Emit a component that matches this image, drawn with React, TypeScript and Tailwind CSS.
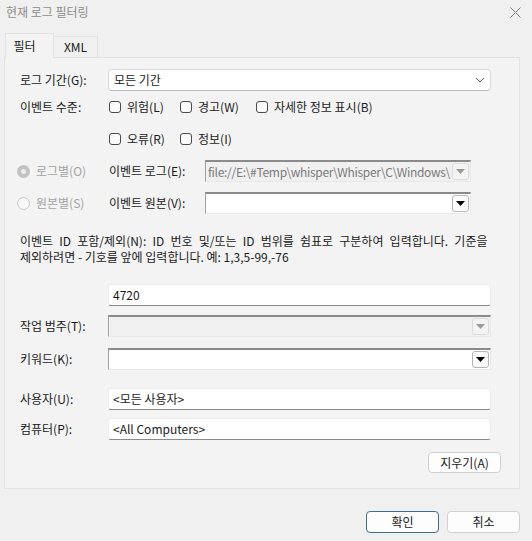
import React from 'react';

const font = { fontFamily: '"Noto Sans CJK KR", "Noto Sans", sans-serif' };

function Chevron() {
  return (
    <svg width="10" height="6" viewBox="0 0 10 6" className="text-[#5f5f5f]">
      <path d="M1 1l4 4 4-4" fill="none" stroke="currentColor" strokeWidth="1" />
    </svg>
  );
}

function DropButton({ disabled }: { disabled?: boolean }) {
  return (
    <div
      className={`flex h-[17px] w-[17px] items-center justify-center rounded-[3px] border ${
        disabled ? 'border-[#dcdcdc] bg-[#f3f3f3]' : 'border-[#b5b5b5] bg-[#fbfbfb]'
      }`}
    >
      <svg width="9" height="5" viewBox="0 0 9 5">
        <path d="M0 0h9L4.5 5z" fill={disabled ? '#9a9a9a' : '#000'} />
      </svg>
    </div>
  );
}

function Check({ label, w }: { label: string; w: string }) {
  return (
    <div className={`flex items-center ${w}`}>
      <span className="h-[12px] w-[12px] rounded-[3px] border border-[#4a4a4a] bg-[#fbfbfb]" />
      <span className="ml-[6px] text-[12px] text-[#1a1a1a]">{label}</span>
    </div>
  );
}

function ClassicCombo({
  width,
  disabled,
  text,
}: {
  width: string;
  disabled?: boolean;
  text?: string;
}) {
  return (
    <div
      className={`flex h-[22px] ${width} items-center overflow-hidden border-t-2 border-l border-b border-r border-t-[#8a8a8a] border-l-[#a0a0a0] border-b-[#e8e8e8] border-r-[#e8e8e8] ${
        disabled ? 'bg-[#f0f0f0]' : 'bg-white'
      }`}
    >
      <span className="min-w-0 flex-1 overflow-hidden whitespace-nowrap pl-[2px] text-[12px] tracking-[-0.3px] text-[#7a7a7a]">
        {text}
      </span>
      <div className="mr-[1px] shrink-0">
        <DropButton disabled={disabled} />
      </div>
    </div>
  );
}

function TextBox({ value }: { value: string }) {
  return (
    <div className="flex h-[22px] w-[383px] items-center rounded-[3px] border border-[#ececec] border-b-[#8a8a8a] bg-white pl-[4px] text-[12px] text-[#1a1a1a]">
      {value}
    </div>
  );
}

export default function App() {
  return (
    <div className="relative h-[541px] w-[532px] overflow-hidden bg-[#f0f0f0]" style={font}>
      <div className="flex h-[24px] items-center justify-between pl-[6px] pr-[11px]">
        <span className="text-[12px] text-[#8c8c8c]">현재 로그 필터링</span>
        <svg width="11" height="11" viewBox="0 0 11 11">
          <path d="M0.5 0.5l10 10M10.5 0.5l-10 10" stroke="#7a7a7a" strokeWidth="1" />
        </svg>
      </div>

      <div className="ml-[5px] mt-[9px] flex h-[24px] items-end">
        <div className="relative z-10 -mb-px flex h-[25px] w-[49px] items-start justify-center border border-b-0 border-[#e2e2e2] bg-[#f3f3f3] pt-[3px] pr-[10px] text-[12px] text-[#1a1a1a]">
          필터
        </div>
        <div className="flex h-[21px] w-[44px] items-center justify-center border border-l-0 border-b-0 border-[#e2e2e2] bg-[#f0f0f0] text-[12px] text-[#1a1a1a]">
          XML
        </div>
      </div>

      <div className="ml-[4px] flex h-[432px] w-[516px] flex-col border border-[#e2e2e2] bg-[#f3f3f3] pl-[15px]">
        <div className="mt-[11px] flex h-[22px] items-center">
          <span className="w-[88px] text-[12px] text-[#1a1a1a]">로그 기간(G):</span>
          <div className="flex h-[22px] w-[383px] items-center justify-between rounded-[4px] border border-[#dadada] border-b-[#bcbcbc] bg-white pl-[5px] pr-[5px] text-[12px] text-[#1a1a1a]">
            <span>모든 기간</span>
            <Chevron />
          </div>
        </div>

        <div className="mt-[5px] flex h-[22px] items-center">
          <span className="w-[89px] text-[12px] text-[#1a1a1a]">이벤트 수준:</span>
          <Check label="위험(L)" w="w-[71px]" />
          <Check label="경고(W)" w="w-[76px]" />
          <Check label="자세한 정보 표시(B)" w="" />
        </div>
        <div className="mt-[10px] flex h-[22px] items-center pl-[89px]">
          <Check label="오류(R)" w="w-[71px]" />
          <Check label="정보(I)" w="" />
        </div>

        <div className="mt-[10px] flex h-[22px] items-center">
          <div className="-ml-[3px] flex w-[92px] items-center">
            <span className="flex h-[13px] w-[13px] items-center justify-center rounded-full bg-[#c2c2c2]">
              <span className="h-[5px] w-[5px] rounded-full bg-[#ececec]" />
            </span>
            <span className="ml-[6px] text-[12px] text-[#a3a3a3]">로그별(O)</span>
          </div>
          <span className="w-[96px] text-[12px] text-[#1a1a1a]">이벤트 로그(E):</span>
          <ClassicCombo width="w-[266px]" disabled text="file://E:\#Temp\whisper\Whisper\C\Windows\" />
        </div>

        <div className="mt-[10px] flex h-[22px] items-center">
          <div className="-ml-[3px] flex w-[92px] items-center">
            <span className="h-[13px] w-[13px] rounded-full border border-[#c8c8c8] bg-[#f8f8f8]" />
            <span className="ml-[6px] text-[12px] text-[#a3a3a3]">원본별(S)</span>
          </div>
          <span className="w-[96px] text-[12px] text-[#1a1a1a]">이벤트 원본(V):</span>
          <ClassicCombo width="w-[266px]" />
        </div>

        <div className="mt-[19px] w-[490px] text-[12px] leading-[16px] text-[#1a1a1a]">
          <span className="whitespace-nowrap [word-spacing:3.5px]">
            이벤트 ID 포함/제외(N): ID 번호 및/또는 ID 범위를 쉼표로 구분하여 입력합니다. 기준을
          </span>
          <br />
          제외하려면 - 기호를 앞에 입력합니다. 예: 1,3,5-99,-76
        </div>

        <div className="mt-[19px] flex h-[22px] items-center pl-[88px]">
          <TextBox value="4720" />
        </div>

        <div className="mt-[8px] flex h-[23px] items-center">
          <span className="w-[88px] text-[12px] text-[#1a1a1a]">작업 범주(T):</span>
          <ClassicCombo width="w-[383px]" disabled />
        </div>

        <div className="mt-[10px] flex h-[23px] items-center">
          <span className="w-[88px] text-[12px] text-[#1a1a1a]">키워드(K):</span>
          <ClassicCombo width="w-[383px]" />
        </div>

        <div className="mt-[18px] flex h-[22px] items-center">
          <span className="w-[88px] text-[12px] text-[#1a1a1a]">사용자(U):</span>
          <TextBox value="<모든 사용자>" />
        </div>

        <div className="mt-[8px] flex h-[22px] items-center">
          <span className="w-[88px] text-[12px] text-[#1a1a1a]">컴퓨터(P):</span>
          <TextBox value="<All Computers>" />
        </div>

        <div className="mt-[12px] flex pl-[408px]">
          <button className="flex h-[21px] w-[73px] items-center justify-center rounded-[4px] border border-[#d0d0d0] bg-[#fdfdfd] text-[12px] text-[#1a1a1a]">
            지우기(A)
          </button>
        </div>
      </div>

      <div className="mt-[22px] flex justify-end gap-[8px] pr-[12px]">
        <button className="flex h-[22px] w-[73px] items-center justify-center rounded-[4px] border border-[#3f6e8f] bg-[#fdfdfd] text-[12px] text-[#1a1a1a]">
          확인
        </button>
        <button className="flex h-[22px] w-[73px] items-center justify-center rounded-[4px] border border-[#d0d0d0] bg-[#fdfdfd] text-[12px] text-[#1a1a1a]">
          취소
        </button>
      </div>
    </div>
  );
}
